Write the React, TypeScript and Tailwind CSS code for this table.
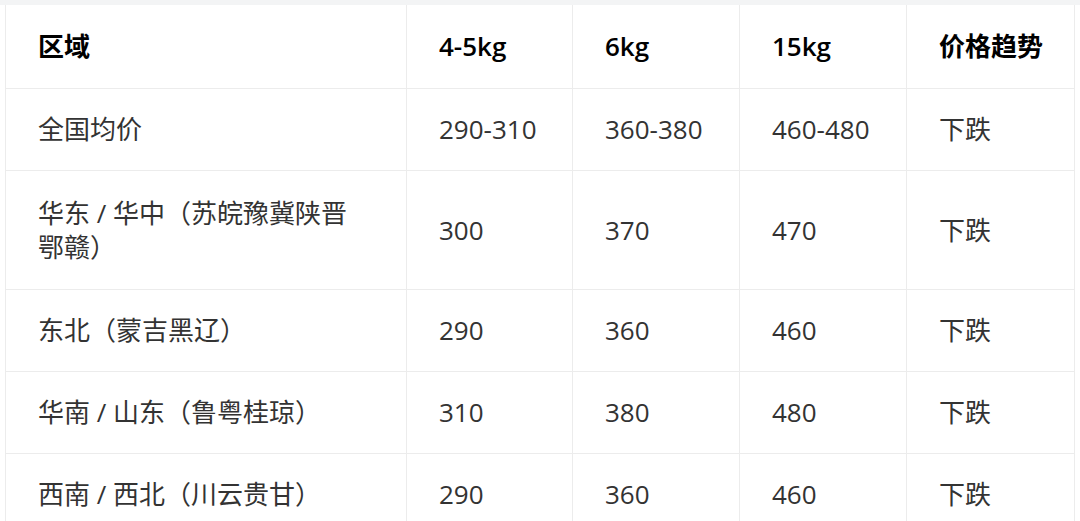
const rows: { region: React.ReactNode; a: string; b: string; c: string; trend: string; tall?: boolean }[] = [
  { region: "全国均价", a: "290-310", b: "360-380", c: "460-480", trend: "下跌" },
  {
    region: (
      <>
        华东 / 华中（苏皖豫冀陕晋
        <br />
        鄂赣）
      </>
    ),
    a: "300",
    b: "370",
    c: "470",
    trend: "下跌",
    tall: true,
  },
  { region: "东北（蒙吉黑辽）", a: "290", b: "360", c: "460", trend: "下跌" },
  { region: "华南 / 山东（鲁粤桂琼）", a: "310", b: "380", c: "480", trend: "下跌" },
  { region: "西南 / 西北（川云贵甘）", a: "290", b: "360", c: "460", trend: "下跌" },
];

const cell = "border border-[#ececec] pl-[32px] pr-2 align-middle whitespace-nowrap";

export default function App() {
  return (
    <div
      className="w-[1080px] h-[521px] overflow-hidden bg-white"
      style={{ fontFamily: '"Open Sans", "Noto Sans CJK SC", sans-serif' }}
    >
      <div className="h-[5px] bg-[#f3f4f5]" />
      <table className="ml-[5px] w-[1069px] table-fixed border-collapse text-[26px] leading-[34px] text-[#333333]">
        <colgroup>
          <col className="w-[401px]" />
          <col className="w-[166px]" />
          <col className="w-[167px]" />
          <col className="w-[167px]" />
          <col className="w-[168px]" />
        </colgroup>
        <thead>
          <tr className="h-[83px] text-black">
            <th className={`${cell} border-t-0 text-left font-bold`}>区域</th>
            <th className={`${cell} border-t-0 text-left font-semibold`}>4-5kg</th>
            <th className={`${cell} border-t-0 text-left font-semibold`}>6kg</th>
            <th className={`${cell} border-t-0 text-left font-semibold`}>15kg</th>
            <th className={`${cell} border-t-0 text-left font-bold`}>价格趋势</th>
          </tr>
        </thead>
        <tbody>
          {rows.map((r, i) => (
            <tr key={i} className={r.tall ? "h-[119px]" : "h-[82px]"}>
              <td className={cell}>{r.region}</td>
              <td className={cell}>{r.a}</td>
              <td className={cell}>{r.b}</td>
              <td className={cell}>{r.c}</td>
              <td className={cell}>{r.trend}</td>
            </tr>
          ))}
        </tbody>
      </table>
    </div>
  );
}
